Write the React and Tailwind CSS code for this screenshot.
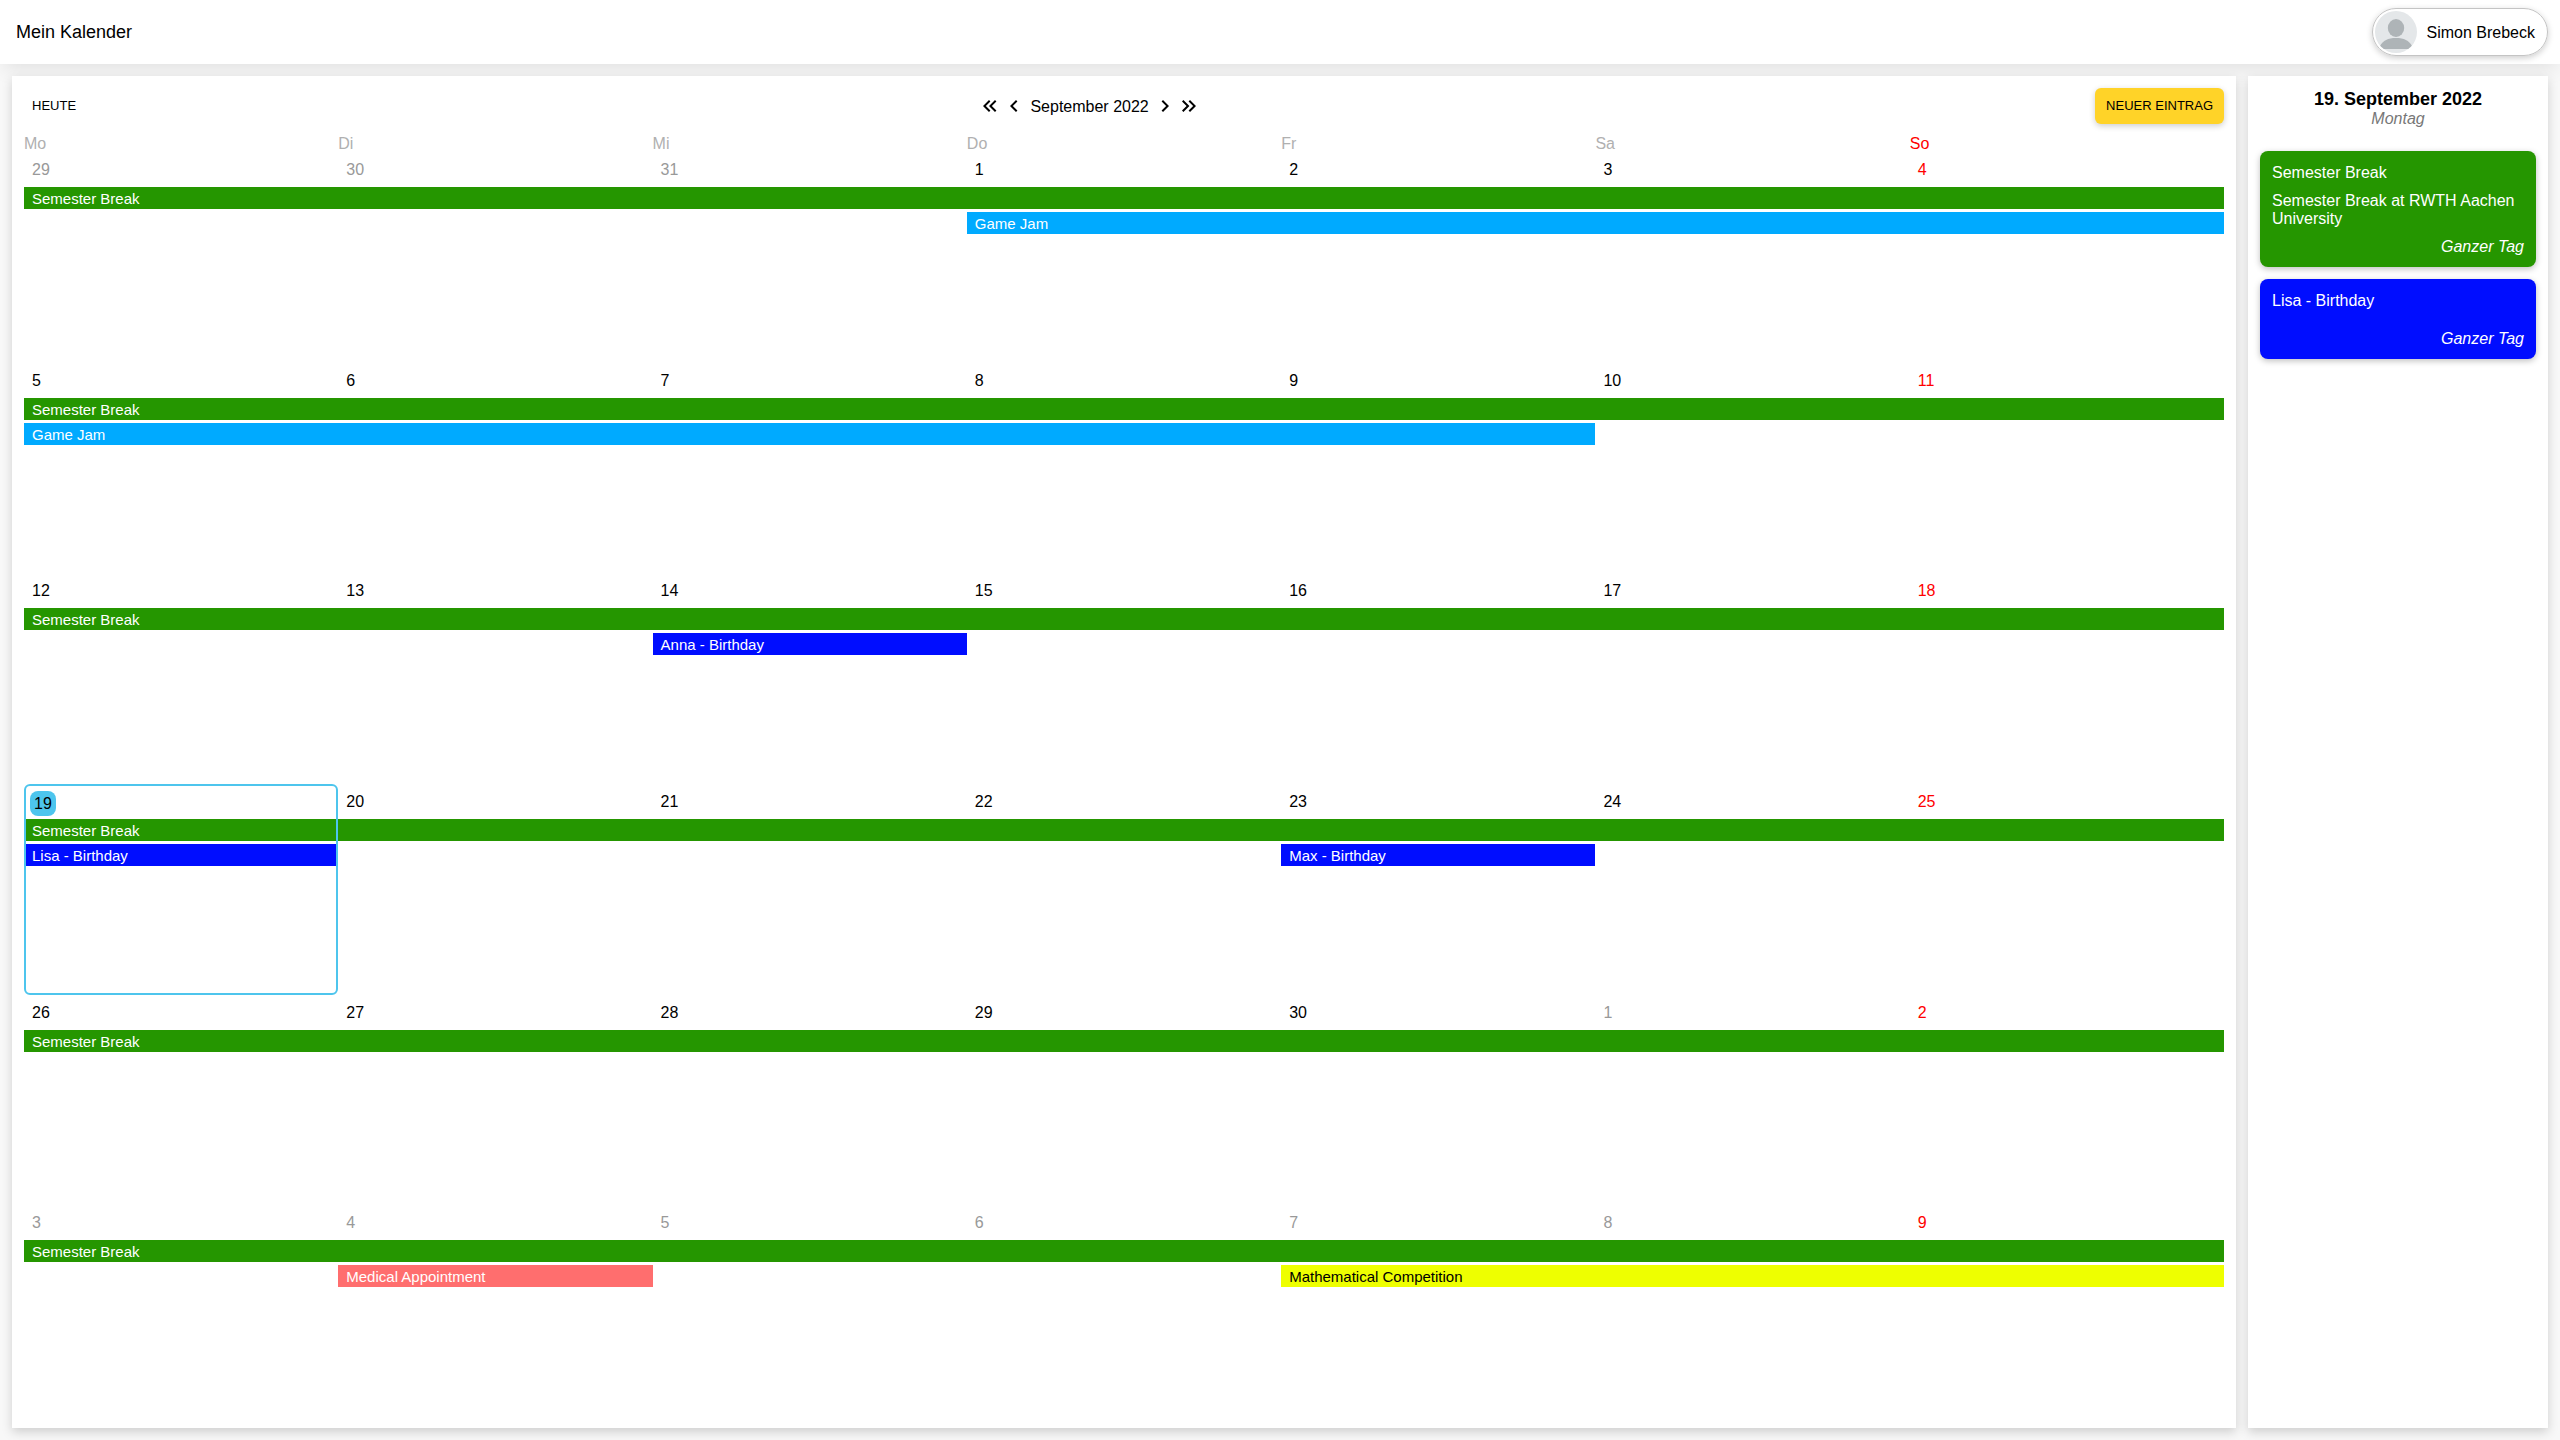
import React from "react";

const WEEKDAYS = ["Mo", "Di", "Mi", "Do", "Fr", "Sa", "So"];

const GREEN = "bg-[#259600] text-white";
const SKY = "bg-[#00aaff] text-white";
const BLUE = "bg-[#000dff] text-white";
const CORAL = "bg-[#ff6e6e] text-white";
const YELLOW = "bg-[#eeff00] text-black";

const ALL_WEEK = { title: "Semester Break", color: GREEN, start: 0, days: 7, row: 1 };

const WEEKS = [
  { days: [29, 30, 31, 1, 2, 3, 4], muted: [0, 1, 2], events: [ALL_WEEK, { title: "Game Jam", color: SKY, start: 3, days: 4, row: 2 }] },
  { days: [5, 6, 7, 8, 9, 10, 11], muted: [], events: [ALL_WEEK, { title: "Game Jam", color: SKY, start: 0, days: 5, row: 2 }] },
  { days: [12, 13, 14, 15, 16, 17, 18], muted: [], events: [ALL_WEEK, { title: "Anna - Birthday", color: BLUE, start: 2, days: 1, row: 2 }] },
  {
    days: [19, 20, 21, 22, 23, 24, 25],
    muted: [],
    selected: 0,
    events: [
      ALL_WEEK,
      { title: "Lisa - Birthday", color: BLUE, start: 0, days: 1, row: 2 },
      { title: "Max - Birthday", color: BLUE, start: 4, days: 1, row: 2 },
    ],
  },
  { days: [26, 27, 28, 29, 30, 1, 2], muted: [5], events: [ALL_WEEK] },
  {
    days: [3, 4, 5, 6, 7, 8, 9],
    muted: [0, 1, 2, 3, 4, 5],
    events: [
      ALL_WEEK,
      { title: "Medical Appointment", color: CORAL, start: 1, days: 1, row: 2 },
      { title: "Mathematical Competition", color: YELLOW, start: 4, days: 3, row: 2 },
    ],
  },
];

const AGENDA = [
  { title: "Semester Break", text: "Semester Break at RWTH Aachen University", color: GREEN },
  { title: "Lisa - Birthday", text: "", color: BLUE },
];

const ICONS = {
  first: "M18.41 7.41 17 6l-6 6 6 6 1.41-1.41L13.83 12zM12.41 7.41 11 6l-6 6 6 6 1.41-1.41L7.83 12z",
  prev: "M15.41 7.41 14 6l-6 6 6 6 1.41-1.41L10.83 12z",
  next: "M10 6 8.59 7.41 13.17 12l-4.58 4.59L10 18l6-6z",
  last: "M6.41 6 5 7.41 9.58 12 5 16.59 6.41 18l6-6zM13 6l-1.41 1.41L16.17 12l-4.58 4.59L13 18l6-6z",
};

function NavButton({ icon, label }) {
  return (
    <button type="button" aria-label={label} className="size-6">
      <svg viewBox="0 0 24 24" className="size-6" fill="currentColor" aria-hidden="true">
        <path d={ICONS[icon]} />
      </svg>
    </button>
  );
}

function Avatar() {
  return (
    <svg viewBox="0 0 42 42" className="size-[42px] rounded-full" aria-hidden="true">
      <rect width="42" height="42" fill="#e4e7e9" />
      <ellipse cx="21" cy="17" rx="8.2" ry="9" fill="#aeb4b7" />
      <path d="M5 38V35C8 29.500 13 27 21 27s13 2.500 16 8v3z" fill="#aeb4b7" />
    </svg>
  );
}

function Week({ week }) {
  return (
    <div className="relative min-h-0 flex-1">
      <div className="grid h-full grid-cols-7">
        {week.days.map((day, i) => {
          const selected = week.selected === i;
          const tone = i === 6 ? "text-[#ff0000]" : week.muted.includes(i) ? "text-[#999999]" : "text-black";
          return (
            <button
              key={i}
              type="button"
              className={`flex items-start text-left leading-[18px] ${tone} ${
                selected ? "z-10 rounded-md border-2 border-[#4dc5ed] px-1 py-[5px]" : "px-2 py-[9px]"
              }`}
            >
              {selected ? (
                <span className="rounded-lg bg-[#4dc5ed] px-1 pt-1 pb-[3px]">{day}</span>
              ) : (
                day
              )}
            </button>
          );
        })}
      </div>
      <div className="pointer-events-none absolute inset-x-0 top-[35px] grid auto-rows-[22px] grid-cols-7 gap-y-[3px]">
        {week.events.map((e) => (
          <div
            key={e.title}
            className={`truncate px-2 text-[15px] leading-6 ${e.color}`}
            style={{ gridColumn: `${e.start + 1} / span ${e.days}`, gridRow: e.row }}
          >
            {e.title}
          </div>
        ))}
      </div>
    </div>
  );
}

export default function App() {
  return (
    <div className="flex min-h-screen flex-col bg-[#f8f8f8] font-['Liberation_Sans',Arial,sans-serif] text-base text-black">
      <header className="flex h-16 items-center justify-between bg-white pr-3 pl-4 shadow-[0_8px_20px_-4px_rgba(0,0,0,0.1)]">
        <h1 className="text-lg">Mein Kalender</h1>
        <button
          type="button"
          className="flex h-12 items-center gap-[10px] rounded-full border border-[#c4c4c4] pr-3 pl-[2px] leading-5 shadow-[0_2px_6px_rgba(0,0,0,0.2)]"
        >
          <Avatar />
          <span className="pt-px">Simon Brebeck</span>
        </button>
      </header>

      <main className="flex flex-1 gap-3 p-3">
        <section className="flex min-w-0 flex-1 flex-col bg-white p-3 shadow-[0_4px_10px_rgba(0,0,0,0.17)]">
          <div className="flex items-center justify-between">
            <button type="button" className="h-9 px-2 text-[13px]">
              HEUTE
            </button>
            <div className="flex items-center">
              <NavButton icon="first" label="Vorheriges Jahr" />
              <NavButton icon="prev" label="Vorheriger Monat" />
              <h2 className="px-1 pt-[2px] leading-[18px]">September 2022</h2>
              <NavButton icon="next" label="Nächster Monat" />
              <NavButton icon="last" label="Nächstes Jahr" />
            </div>
            <button
              type="button"
              className="h-9 rounded-md bg-[#ffd328] px-[11px] text-[13px] shadow-[0_2px_6px_rgba(0,0,0,0.2)]"
            >
              NEUER EINTRAG
            </button>
          </div>
          <div className="grid h-7 grid-cols-7 pt-[11px] leading-[18px] text-[#b0b0b0]">
            {WEEKDAYS.map((d) => (
              <div key={d} className="last:text-[#ff0000]">
                {d}
              </div>
            ))}
          </div>
          <div className="flex flex-1 flex-col">
            {WEEKS.map((w, i) => (
              <Week key={i} week={w} />
            ))}
          </div>
        </section>

        <aside className="w-[300px] shrink-0 bg-white p-3 shadow-[0_4px_10px_rgba(0,0,0,0.17)]">
          <h2 className="text-center text-lg leading-[22px] font-bold">19. September 2022</h2>
          <p className="text-center leading-[18px] text-[#777777] italic">Montag</p>
          <div className="flex flex-col gap-3 pt-[23px]">
            {AGENDA.map((a) => (
              <article
                key={a.title}
                className={`rounded-lg px-3 pt-[13px] pb-[11px] leading-[18px] shadow-[0_2px_6px_rgba(0,0,0,0.25)] ${a.color}`}
              >
                <h3>{a.title}</h3>
                <p className="py-[10px]">{a.text}</p>
                <p className="text-right italic">Ganzer Tag</p>
              </article>
            ))}
          </div>
        </aside>
      </main>
    </div>
  );
}
